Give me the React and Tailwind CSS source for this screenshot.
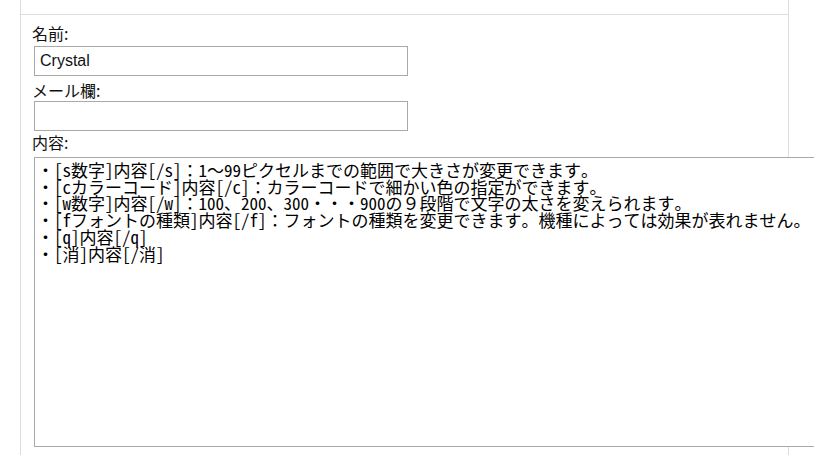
const body = [
  '・[s数字]内容[/s]：1～99ピクセルまでの範囲で大きさが変更できます。',
  '・[cカラーコード]内容[/c]：カラーコードで細かい色の指定ができます。',
  '・[w数字]内容[/w]：100、200、300・・・900の９段階で文字の太さを変えられます。',
  '・[fフォントの種類]内容[/f]：フォントの種類を変更できます。機種によっては効果が表れません。',
  '・[q]内容[/q]',
  '・[消]内容[/消]',
].join('\n');

const labelCls = "block h-[20px] leading-[20px] text-[16px] text-[#111] font-['Noto_Sans_CJK_JP',sans-serif]";

const App = () => {
  return (
    <div className="min-h-[455px] bg-white pl-[20px]">
      <div className="min-h-[455px] w-[769px] border-l border-r border-[#dddddd]">
        {/* ヘッダー部分 */}
        <div className="h-[15px] border-b border-[#dddddd]" />

        {/* 投稿フォーム */}
        <form className="pl-[11px]" onSubmit={(e) => e.preventDefault()}>
          <label className={`${labelCls} mt-[8px]`}>名前:</label>
          <input
            type="text"
            defaultValue="Crystal"
            className="mt-[3px] ml-[2px] block h-[30px] w-[374px] border border-[#a9a9a9] px-[5px] text-[16px] text-[#111] outline-none font-['Liberation_Sans',Arial,sans-serif]"
          />

          <label className={`${labelCls} mt-[4px]`}>メール欄:</label>
          <input
            type="text"
            className="mt-[1px] ml-[2px] block h-[30px] w-[374px] border border-[#a9a9a9] px-[5px] text-[16px] text-[#111] outline-none font-['Liberation_Sans',Arial,sans-serif]"
          />

          <label className={`${labelCls} mt-[1px]`}>内容:</label>
          <textarea
            defaultValue={body}
            className="mt-[5px] ml-[2px] block h-[290px] w-[780px] resize-none overflow-hidden whitespace-pre border border-r-0 border-[#a9a9a9] bg-white pt-[4px] pl-[2px] text-[17px] leading-[16.7px] text-black outline-none font-['Noto_Sans_Mono_CJK_JP','Noto_Sans_CJK_JP',monospace]"
          />
        </form>
      </div>
    </div>
  );
};

export default App;
